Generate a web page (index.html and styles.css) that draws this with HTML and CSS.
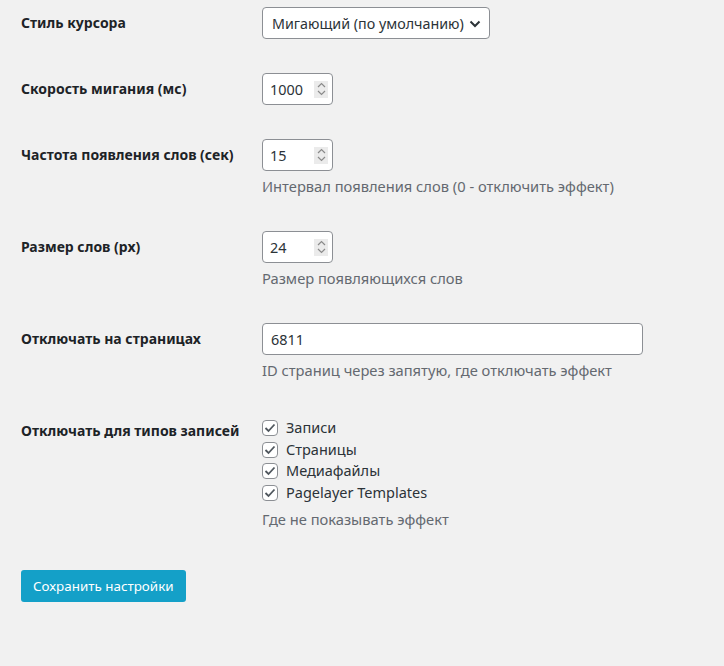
FILE: index.html
```html
<!DOCTYPE html>
<html lang="ru">
<head>
<meta charset="utf-8">
<title>Настройки</title>
<link rel="stylesheet" href="styles.css">
</head>
<body>
<form class="settings">
  <div class="row">
    <label class="label" for="style">Стиль курсора</label>
    <div class="field">
      <div class="select-wrap">
        <select id="style" class="select">
          <option>Мигающий (по умолчанию)</option>
        </select>
        <svg class="chev" width="12" height="8" viewBox="0 0 12 8"><path d="M1.5 1.5 L6 6 L10.5 1.5" fill="none" stroke="#2c3338" stroke-width="2"/></svg>
      </div>
    </div>
  </div>

  <div class="row">
    <label class="label" for="speed">Скорость мигания (мс)</label>
    <div class="field">
      <div class="num">
        <input id="speed" class="num-input" type="text" value="1000">
        <span class="spin"><svg width="9" height="14" viewBox="0 0 9 14"><path d="M1 5 L4.5 1.5 L8 5 M1 9 L4.5 12.5 L8 9" fill="none" stroke="#8a8a8a" stroke-width="1.2"/></svg></span>
      </div>
    </div>
  </div>

  <div class="row">
    <label class="label" for="freq">Частота появления слов (сек)</label>
    <div class="field">
      <div class="num">
        <input id="freq" class="num-input" type="text" value="15">
        <span class="spin"><svg width="9" height="14" viewBox="0 0 9 14"><path d="M1 5 L4.5 1.5 L8 5 M1 9 L4.5 12.5 L8 9" fill="none" stroke="#8a8a8a" stroke-width="1.2"/></svg></span>
      </div>
      <p class="desc">Интервал появления слов (0 - отключить эффект)</p>
    </div>
  </div>

  <div class="row">
    <label class="label" for="size">Размер слов (px)</label>
    <div class="field">
      <div class="num">
        <input id="size" class="num-input" type="text" value="24">
        <span class="spin"><svg width="9" height="14" viewBox="0 0 9 14"><path d="M1 5 L4.5 1.5 L8 5 M1 9 L4.5 12.5 L8 9" fill="none" stroke="#8a8a8a" stroke-width="1.2"/></svg></span>
      </div>
      <p class="desc">Размер появляющихся слов</p>
    </div>
  </div>

  <div class="row">
    <label class="label" for="pages">Отключать на страницах</label>
    <div class="field">
      <input id="pages" class="text-input" type="text" value="6811">
      <p class="desc">ID страниц через запятую, где отключать эффект</p>
    </div>
  </div>

  <div class="row">
    <span class="label">Отключать для типов записей</span>
    <div class="field">
      <ul class="checks">
        <li class="check"><span class="box"><svg width="12" height="10" viewBox="0 0 12 10"><path d="M1.5 5 L4.5 8 L10.5 1.5" fill="none" stroke="#50575e" stroke-width="1.8"/></svg></span>Записи</li>
        <li class="check"><span class="box"><svg width="12" height="10" viewBox="0 0 12 10"><path d="M1.5 5 L4.5 8 L10.5 1.5" fill="none" stroke="#50575e" stroke-width="1.8"/></svg></span>Страницы</li>
        <li class="check"><span class="box"><svg width="12" height="10" viewBox="0 0 12 10"><path d="M1.5 5 L4.5 8 L10.5 1.5" fill="none" stroke="#50575e" stroke-width="1.8"/></svg></span>Медиафайлы</li>
        <li class="check"><span class="box"><svg width="12" height="10" viewBox="0 0 12 10"><path d="M1.5 5 L4.5 8 L10.5 1.5" fill="none" stroke="#50575e" stroke-width="1.8"/></svg></span>Pagelayer Templates</li>
      </ul>
      <p class="desc">Где не показывать эффект</p>
    </div>
  </div>

  <div class="actions">
    <button type="button" class="button">Сохранить настройки</button>
  </div>
</form>
</body>
</html>
```

FILE: styles.css
```css
html, body {
  margin: 0;
  padding: 0;
  background: #f1f1f1;
}
body {
  font-family: "Noto Sans", "Open Sans", sans-serif;
  font-size: 14px;
  color: #2c3338;
}
.settings {
  display: flex;
  flex-direction: column;
  gap: 34px;
  padding: 7px 0 0 21px;
}
.row {
  display: grid;
  grid-template-columns: 241px 1fr;
  align-items: start;
}
.label {
  padding-top: 6px;
  font-weight: 700;
  font-size: 14px;
  line-height: 20px;
  color: #1d2327;
}
.field {
  display: flex;
  flex-direction: column;
  align-items: flex-start;
}
.select-wrap {
  display: flex;
  align-items: center;
  width: 226px;
  height: 30px;
  border: 1px solid #8c8f94;
  border-radius: 4px;
  background: #fff;
}
.select {
  flex: 1;
  appearance: none;
  -webkit-appearance: none;
  border: 0;
  background: transparent;
  font: inherit;
  font-size: 14.3px;
  color: #2c3338;
  padding: 0 0 0 9px;
  height: 30px;
  outline: none;
}
.chev {
  margin: 1px 8px 0 4px;
}
.num {
  display: flex;
  align-items: center;
  width: 69px;
  height: 30px;
  border: 1px solid #8c8f94;
  border-radius: 4px;
  background: #fff;
}
.num-input {
  width: 40px;
  border: 0;
  padding: 0 0 0 7px;
  font: inherit;
  font-size: 14.4px;
  color: #2c3338;
  background: transparent;
  outline: none;
}
.spin {
  display: flex;
  align-items: center;
  justify-content: center;
  width: 14px;
  height: 17px;
  margin-left: auto;
  margin-right: 4px;
  background: #ebebeb;
}
.text-input {
  box-sizing: border-box;
  width: 381px;
  height: 32px;
  border: 1px solid #8c8f94;
  border-radius: 4px;
  background: #fff;
  padding: 0 8px;
  font: inherit;
  font-size: 14.4px;
  color: #2c3338;
  outline: none;
}
.desc {
  margin: 5px 0 0;
  font-size: 14.7px;
  line-height: 21px;
  color: #646970;
}
.checks {
  list-style: none;
  margin: 2px 0 0;
  padding: 0;
}
.check {
  display: flex;
  align-items: center;
  font-size: 14.5px;
  line-height: 21.7px;
  color: #2c3338;
}
.box {
  box-sizing: border-box;
  display: flex;
  align-items: center;
  justify-content: center;
  width: 16px;
  height: 16px;
  margin-right: 8px;
  border: 1px solid #8c8f94;
  border-radius: 4px;
  background: #fff;
}
.actions {
  padding-top: 6px;
}
.button {
  height: 32px;
  padding: 0 12px;
  border: 0;
  border-radius: 3px;
  background: #14a0c8;
  color: #fff;
  font: inherit;
  font-size: 13.4px;
  cursor: pointer;
}
```
